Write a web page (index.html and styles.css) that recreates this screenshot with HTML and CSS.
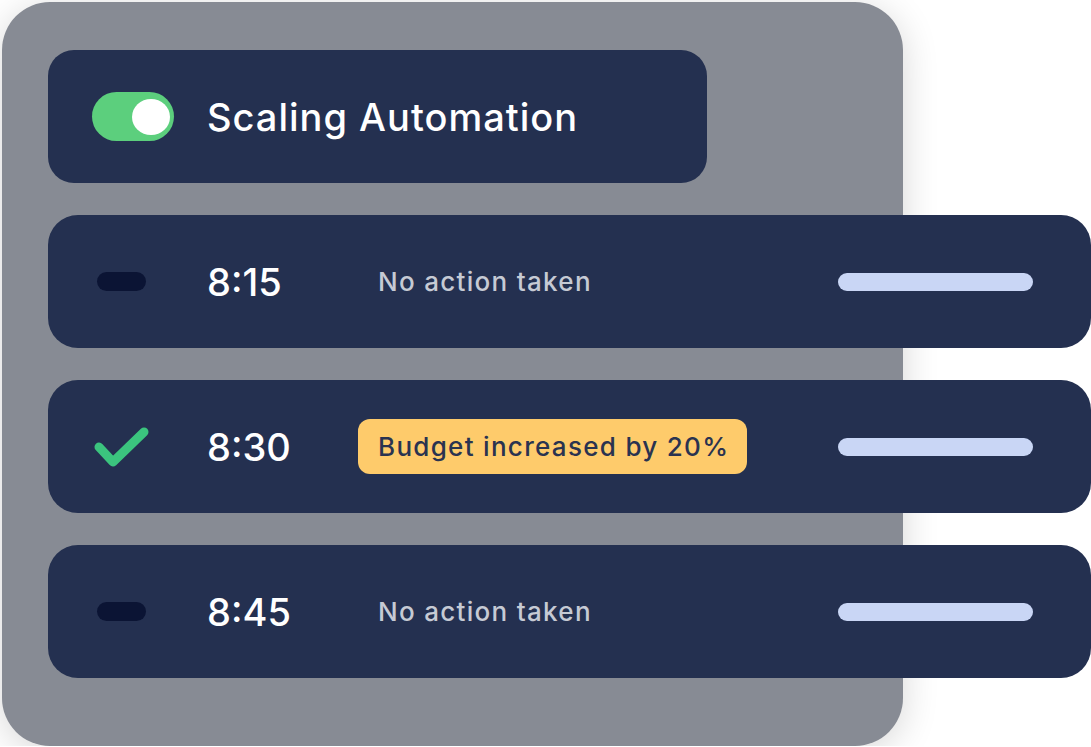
FILE: index.html
```html
<!DOCTYPE html>
<html lang="en">
<head>
    <meta charset="UTF-8">
    <meta name="viewport" content="width=device-width, initial-scale=1.0">
    <title>Scaling Automation</title>
    <link rel="stylesheet" href="styles.css">
</head>
<body>
    <div class="panel">
        <div class="header-card">
            <div class="toggle"><span class="knob"></span></div>
            <h1>Scaling Automation</h1>
        </div>

        <div class="row">
            <div class="status"><span class="dash"></span></div>
            <div class="time">8:15</div>
            <div class="action">No action taken</div>
            <div class="bar"></div>
        </div>

        <div class="row">
            <div class="status">
                <svg class="check" width="56" height="42" viewBox="0 0 56 42">
                    <path d="M6 21 L20 36 L51 6" fill="none" stroke="#3bc47e" stroke-width="9" stroke-linecap="round" stroke-linejoin="round"/>
                </svg>
            </div>
            <div class="time">8:30</div>
            <div class="action badge">Budget increased by 20%</div>
            <div class="bar"></div>
        </div>

        <div class="row">
            <div class="status"><span class="dash"></span></div>
            <div class="time">8:45</div>
            <div class="action">No action taken</div>
            <div class="bar"></div>
        </div>
    </div>
</body>
</html>
```

FILE: styles.css
```css
body {
    margin: 0;
    background-color: #ffffff;
    font-family: Inter, 'Noto Sans', sans-serif;
    overflow: hidden;
}
.panel {
    margin: 2px 0 0 2px;
    width: 901px;
    height: 744px;
    box-sizing: border-box;
    padding: 48px 0 0 46px;
    background-color: #878b94;
    border-radius: 48px;
    box-shadow: 0 6px 36px rgba(0, 0, 0, 0.16);
    display: flex;
    flex-direction: column;
    gap: 32px;
}
.header-card {
    width: 659px;
    height: 133px;
    box-sizing: border-box;
    padding-left: 44px;
    background-color: #243050;
    border-radius: 26px;
    display: flex;
    align-items: center;
    gap: 33px;
    flex-shrink: 0;
}
.toggle {
    width: 82px;
    height: 49px;
    border-radius: 25px;
    background-color: #5ccf7d;
    display: flex;
    align-items: center;
    justify-content: flex-end;
    padding-right: 4px;
    box-sizing: border-box;
}
.knob {
    width: 38px;
    height: 36px;
    border-radius: 50%;
    background-color: #ffffff;
}
h1 {
    margin: 0;
    color: #ffffff;
    font-size: 38px;
    font-weight: 500;
    letter-spacing: 1px;
}
.row {
    width: 1043px;
    height: 133px;
    box-sizing: border-box;
    padding: 0 58px 0 45px;
    background-color: #243050;
    border-radius: 30px;
    display: flex;
    align-items: center;
    flex-shrink: 0;
}
.status {
    width: 56px;
    display: flex;
    justify-content: center;
    align-items: center;
    margin-right: 58px;
}
.dash {
    width: 49px;
    height: 19px;
    border-radius: 10px;
    background-color: #0b1434;
}
.check {
    display: block;
}
.time {
    width: 151px;
    color: #ffffff;
    font-size: 38px;
    font-weight: 500;
}
.action {
    padding: 0 20px;
    color: #c6cad4;
    font-size: 26px;
    font-weight: 500;
    letter-spacing: 1.3px;
}
.badge {
    height: 55px;
    display: flex;
    align-items: center;
    padding: 0 18px 0 20px;
    background-color: #fecb6b;
    color: #2a3350;
    border-radius: 12px;
}
.bar {
    margin-left: auto;
    width: 195px;
    height: 18px;
    border-radius: 9px;
    background-color: #c9d6f5;
}
```
